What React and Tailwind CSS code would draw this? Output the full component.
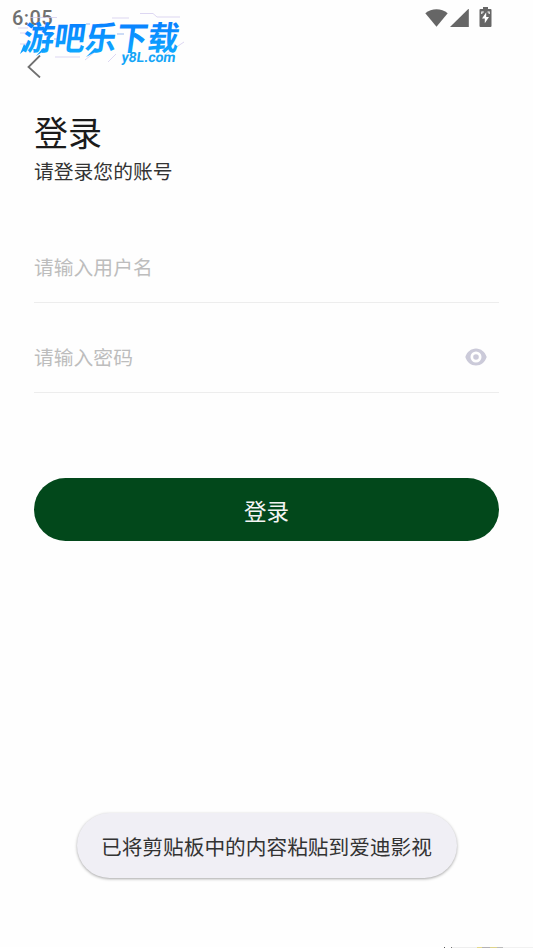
import React from "react";

const CJK = "font-['Noto_Sans_CJK_SC',sans-serif]";

function StatusBar() {
  return (
    <header className="flex h-9 items-center justify-between pl-3 pr-[41px] text-[#707070]">
      <span className="font-['Roboto',sans-serif] text-[20px] font-medium leading-9 tracking-[0.4px]">6:05</span>
      <div className="flex items-center text-[#666]">
        <svg className="h-[19px] w-[23px]" viewBox="0 0 23 19" fill="currentColor">
          <path d="M0.3 4.200C6.500-1.200 16.500-1.200 22.700 4.200L11.500 17.800Z" />
        </svg>
        <svg className="ml-[2px] h-[19px] w-[19px]" viewBox="0 0 19 19" fill="currentColor">
          <path d="M0 18L18.800 -0.500V18Z" />
        </svg>
        <svg className="-mt-[2px] ml-[10px] h-5 w-[13px]" viewBox="0 0 13 20">
          <path d="M4 0h5v2h2.5q1 0 1 1v16q0 1-1 1h-10q-1 0-1-1V3q0-1 1-1H4Z" fill="#666" />
          <path d="M7.2 5.2L3 11.500h2.800v4.800L10 10H7.2Z" fill="white" />
          <path d="M2.800 7V5h2M10.200 7V5H8.500" stroke="white" strokeWidth="1.1" fill="none" />
        </svg>
      </div>
    </header>
  );
}

function Watermark() {
  return (
    <svg className="absolute left-0 top-0 h-[84px] w-[200px]" viewBox="0 0 200 84">
      <defs>
        <linearGradient id="brand" x1="0" y1="0" x2="0" y2="1">
          <stop offset="0.2" stopColor="#087fff" />
          <stop offset="1" stopColor="#10b0ff" />
        </linearGradient>
      </defs>
      <g fill="none" stroke="#cfc5ec" strokeWidth="0.7">
        <path d="M30 17.5H57M140 13.5H153L157 17H180M112 18H129M18 28H28M20 33H30M20 44H30M55 57H80M108 62L116 54M166 54L184 42M85 60L96 51" />
        <path d="M86 24H90M117 34H124M54 39H60" stroke="#719be8" />
      </g>
      <text
        transform="translate(21.500 49.500) skewX(-8)"
        textLength="156"
        lengthAdjust="spacingAndGlyphs"
        className="font-['Noto_Sans_CJK_SC',sans-serif] text-[33px] font-bold"
        fill="url(#brand)"
      >
        游吧乐下载
      </text>
      <path d="M24 44L20 54L27 48ZM43 48L36 56L47 49ZM95 48L86 57L99 50Z" fill="#0f9fff" />
      <text
        transform="translate(121 61.500) skewX(-8)"
        textLength="54"
        lengthAdjust="spacingAndGlyphs"
        className="font-['Roboto',sans-serif] text-[14px] font-bold"
        fill="#14a5f7"
      >
        y8L.com
      </text>
    </svg>
  );
}

function EyeIcon() {
  return (
    <svg className="h-[18px] w-[22px]" viewBox="0 0 22 18">
      <path
        fillRule="evenodd"
        fill="#cbcad9"
        d="M11 .5C6 .5 1.9 4 .3 9c1.6 5 5.7 8.500 10.700 8.500S20.100 14 21.700 9C20.100 4 16 .5 11 .5ZM11 3.500a5.500 5.500 0 1 1 0 11a5.500 5.500 0 0 1 0-11ZM11 6.200a2.800 2.800 0 1 0 0 5.600a2.800 2.800 0 0 0 0-5.600Z"
      />
    </svg>
  );
}

export default function App() {
  return (
    <div className={`relative flex h-[948px] w-full flex-col overflow-hidden bg-[#fefefe] ${CJK}`}>
      <StatusBar />
      <button aria-label="返回" className="ml-[27px] mt-[19px] h-[23px] w-[15px]">
        <svg className="h-[23px] w-[15px]" viewBox="0 0 15 23" fill="none" stroke="#707070" strokeWidth="1.8">
          <path d="M13 .5L1.500 12L13 22.500" />
        </svg>
      </button>
      <main className="flex flex-col px-[34px]">
        <h1 className="mt-[31px] text-[34px] font-normal leading-[46px] text-[#1b1b1b]">登录</h1>
        <p className="mt-px text-[19.8px] leading-[30px] text-[#333]">请登录您的账号</p>
        <div className="mt-[46px] flex h-[71px] items-center border-b border-[#ededed] pb-px">
          <span className="text-[19.8px] leading-[30px] text-[#bdbdbd]">请输入用户名</span>
        </div>
        <div className="mt-[19px] flex h-[71px] items-center justify-between border-b border-[#ededed] pr-3">
          <span className="-mt-px text-[19.8px] leading-[30px] text-[#bdbdbd]">请输入密码</span>
          <EyeIcon />
        </div>
        <button className="mt-[85px] h-[63px] rounded-full bg-[#02481b] pt-[2px] text-[22.5px] text-[#f4f4f4]">
          登录
        </button>
      </main>
      <div className="mx-auto mt-[272px] flex h-[65px] w-[380px] shrink-0 items-center justify-center rounded-full bg-[#f0eff5] pt-[2px] text-[20.7px] text-[#333] shadow-[0_1px_3px_rgba(0,0,0,0.35)]">
        <span className="whitespace-nowrap">已将剪贴板中的内容粘贴到爱迪影视</span>
      </div>
      <footer className="mt-auto flex h-px shrink-0 bg-white pl-[444px]">
        <span className="h-px w-px bg-[#555]" />
        <span className="ml-[6px] h-px w-px bg-[#777]" />
        <span className="h-px w-[25px] bg-[#eee]" />
        <span className="h-px w-[5px] bg-[#e5d98b]" />
        <span className="h-px w-[8px] bg-[#b3b1b5]" />
        <span className="h-px w-[7px] bg-[#ddd38b]" />
        <span className="h-px w-[6px] bg-[#bbb]" />
        <span className="h-px flex-1 bg-[#f1f1f1]" />
      </footer>
      <Watermark />
    </div>
  );
}
